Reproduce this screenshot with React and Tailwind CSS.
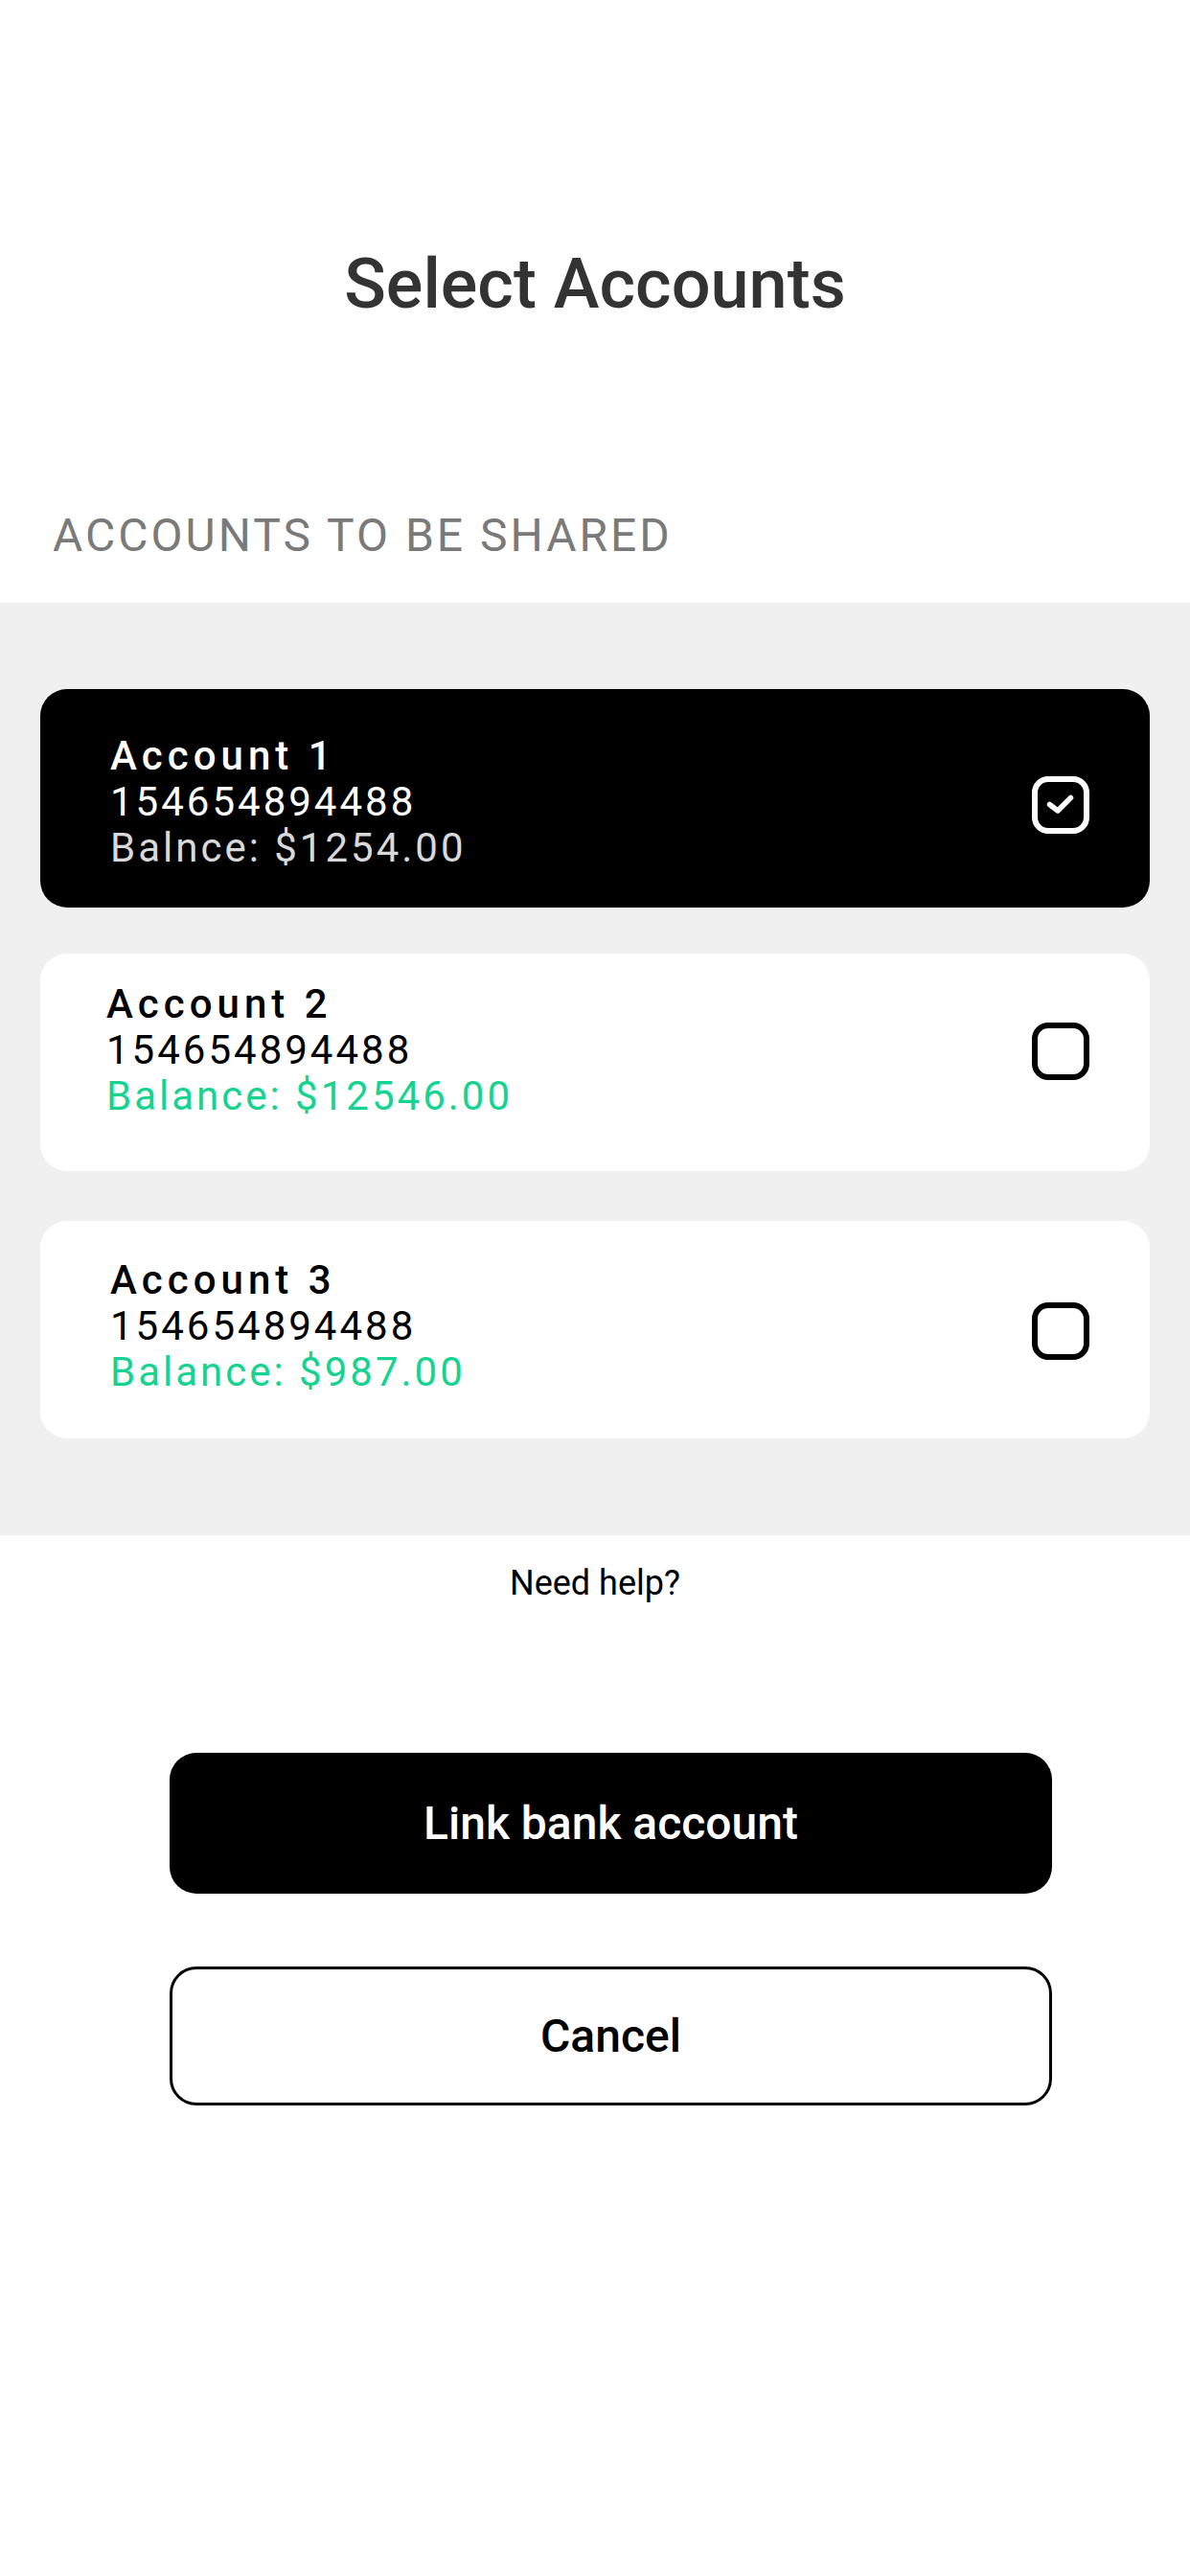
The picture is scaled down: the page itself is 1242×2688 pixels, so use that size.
import React from "react";

function CheckBox({ checked }) {
  if (checked) {
    return (
      <svg width="60" height="60" viewBox="0 0 60 60" className="shrink-0">
        <rect x="3" y="3" width="54" height="54" rx="14" fill="none" stroke="#ffffff" strokeWidth="6" />
        <polyline points="18.5,29.5 27,36 40.5,22.5" fill="none" stroke="#ffffff" strokeWidth="5.5" strokeLinecap="round" strokeLinejoin="round" />
      </svg>
    );
  }
  return (
    <svg width="60" height="60" viewBox="0 0 60 60" className="shrink-0">
      <rect x="3" y="3" width="54" height="54" rx="14" fill="none" stroke="#000000" strokeWidth="6" />
    </svg>
  );
}

export default function App() {
  return (
    <div className="w-[1242px] min-h-[2688px] bg-white font-['Roboto','Liberation_Sans',sans-serif]">
      <h1 className="pt-[255px] text-center text-[72px] leading-[84px] font-medium text-[#333333]">
        Select Accounts
      </h1>
      <p className="mt-[192px] pl-[55px] text-[48px] leading-[56px] tracking-[3px] text-[#7a7a7a]">
        ACCOUNTS TO BE SHARED
      </p>

      <div className="mt-[42px] bg-[#f0f0f0] px-[42px] pt-[90px] pb-[101px] flex flex-col">
        {/* Account 1 */}
        <div className="h-[228px] rounded-[28px] bg-black flex items-start justify-between pl-[73px] pr-[63px]">
          <div className="mt-[46px] text-[42px] leading-[48px] tracking-[3px]">
            <div className="font-medium tracking-[5px] text-white">Account 1</div>
            <div className="text-white">154654894488</div>
            <div className="text-[#d9d9d9]">Balnce: $1254.00</div>
          </div>
          <div className="mt-[91px]">
            <CheckBox checked />
          </div>
        </div>

        {/* Account 2 */}
        <div className="mt-[48px] h-[227px] rounded-[28px] bg-white flex items-start justify-between pl-[69px] pr-[63px]">
          <div className="mt-[29px] text-[42px] leading-[48px] tracking-[3px]">
            <div className="font-medium tracking-[5px] text-black">Account 2</div>
            <div className="text-black">154654894488</div>
            <div className="text-[#17d391]">Balance: $12546.00</div>
          </div>
          <div className="mt-[72px]">
            <CheckBox />
          </div>
        </div>

        {/* Account 3 */}
        <div className="mt-[52px] h-[227px] rounded-[28px] bg-white flex items-start justify-between pl-[73px] pr-[63px]">
          <div className="mt-[38px] text-[42px] leading-[48px] tracking-[3px]">
            <div className="font-medium tracking-[5px] text-black">Account 3</div>
            <div className="text-black">154654894488</div>
            <div className="text-[#17d391]">Balance: $987.00</div>
          </div>
          <div className="mt-[85px]">
            <CheckBox />
          </div>
        </div>
      </div>

      <p className="mt-[29px] text-center text-[36px] leading-[42px] text-black">Need help?</p>

      <div className="mt-[156px] ml-[177px] w-[921px] flex flex-col">
        <button className="h-[147px] rounded-[28px] bg-black text-white text-[48px] font-medium">
          Link bank account
        </button>
        <button className="mt-[76px] h-[145px] rounded-[28px] border-[3px] border-black bg-white text-black text-[48px] font-medium">
          Cancel
        </button>
      </div>
    </div>
  );
}
